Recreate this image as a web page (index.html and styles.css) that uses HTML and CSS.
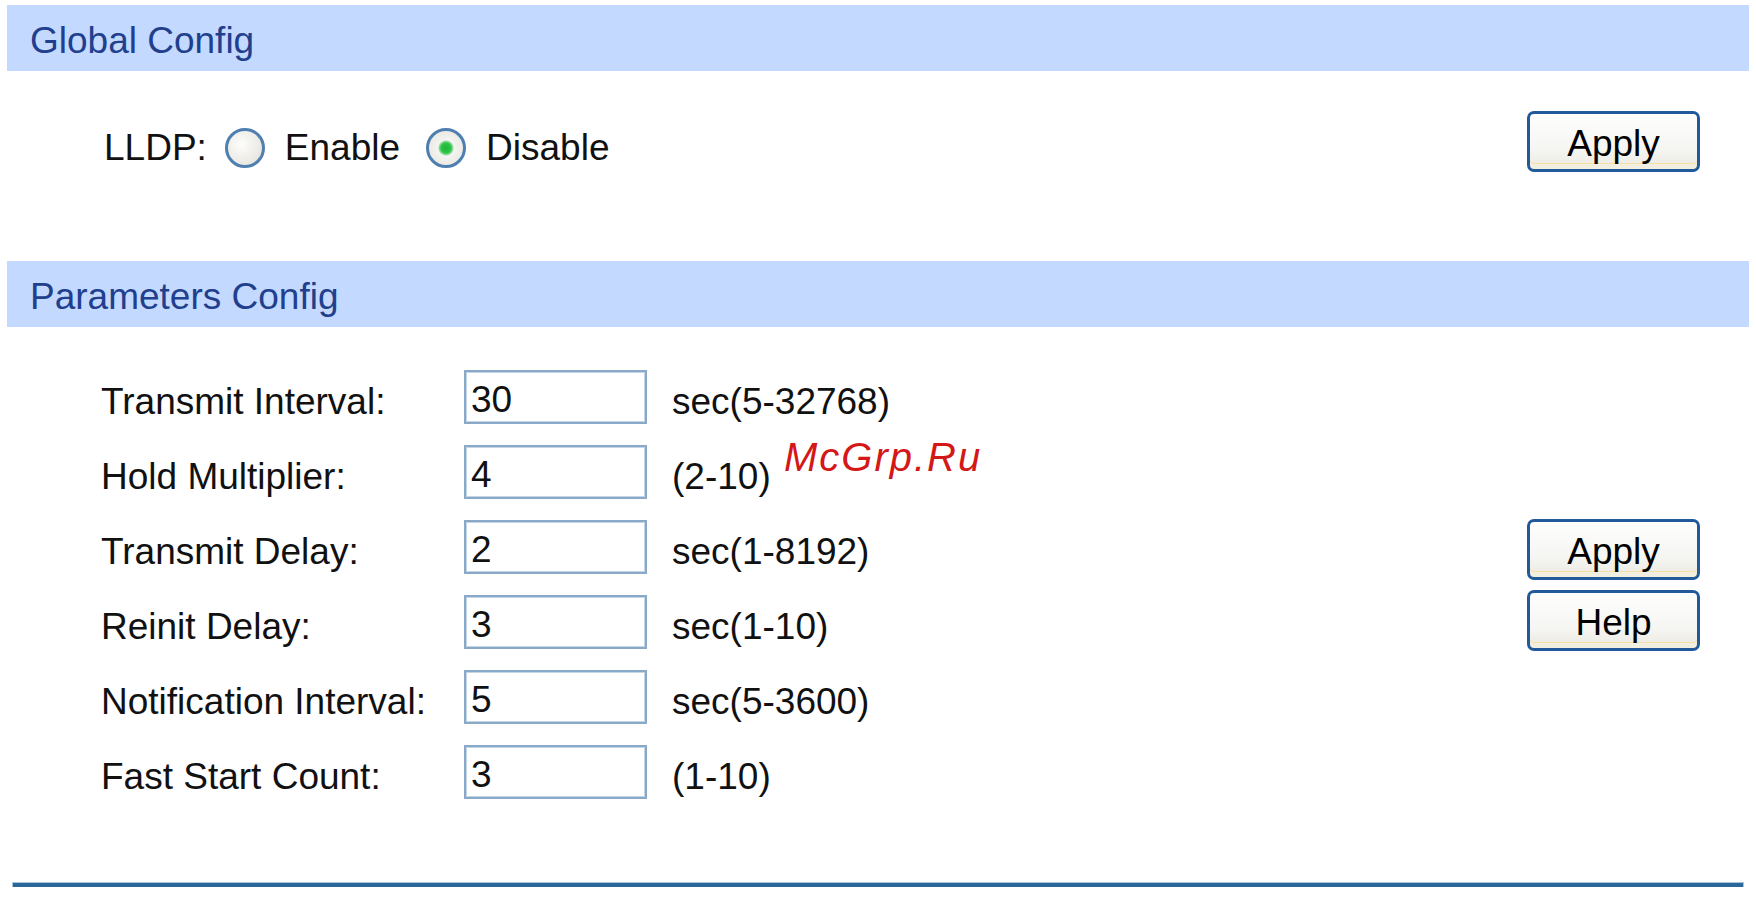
FILE: index.html
```html
<!DOCTYPE html>
<html lang="en">
<head>
    <meta charset="UTF-8">
    <meta name="viewport" content="width=device-width, initial-scale=1.0">
    <title>LLDP Config</title>
    <link rel="stylesheet" href="styles.css">
</head>
<body>

    <div class="panel-head">Global Config</div>
    <div class="global-row">
        <div class="lldp">
            <span class="lldp-label">LLDP:</span>
            <label class="radio-item"><input type="radio" name="lldp" value="enable"> Enable</label>
            <label class="radio-item"><input type="radio" name="lldp" value="disable" checked> Disable</label>
        </div>
        <button class="btn">Apply</button>
    </div>

    <div class="panel-head">Parameters Config</div>
    <div class="params">
        <div class="param-grid">
            <span class="param-label">Transmit Interval:</span>
            <input class="param-input" type="text" value="30">
            <span class="param-hint">sec(5-32768)</span>

            <span class="param-label">Hold Multiplier:</span>
            <input class="param-input" type="text" value="4">
            <span class="param-hint">(2-10)</span>

            <span class="param-label">Transmit Delay:</span>
            <input class="param-input" type="text" value="2">
            <span class="param-hint">sec(1-8192)</span>

            <span class="param-label">Reinit Delay:</span>
            <input class="param-input" type="text" value="3">
            <span class="param-hint">sec(1-10)</span>

            <span class="param-label">Notification Interval:</span>
            <input class="param-input" type="text" value="5">
            <span class="param-hint">sec(5-3600)</span>

            <span class="param-label">Fast Start Count:</span>
            <input class="param-input" type="text" value="3">
            <span class="param-hint">(1-10)</span>
        </div>
        <div class="btn-column">
            <button class="btn">Apply</button>
            <button class="btn">Help</button>
        </div>
    </div>

    <div class="footer-line"></div>

    <div class="watermark">McGrp.Ru</div>

</body>
</html>
```

FILE: styles.css
```css
body {
    margin: 0;
    font-family: "Liberation Sans", Arial, sans-serif;
    font-size: 37px;
    color: #111;
    background: #fff;
}
.panel-head {
    margin: 5px 7px 0;
    height: 66px;
    line-height: 66px;
    padding: 3px 0 0 23px;
    box-sizing: border-box;
    background: #c4d9ff;
    color: #213f8d;
}
.global-row {
    display: flex;
    justify-content: space-between;
    align-items: flex-start;
    height: 185px;
    box-sizing: border-box;
    padding: 40px 56px 0 104px;
}
.lldp {
    display: flex;
    align-items: center;
    margin-top: 16px;
    height: 42px;
}
.lldp-label {
    margin-right: 18px;
}
.radio-item {
    display: flex;
    align-items: center;
    margin-right: 26px;
}
.radio-item input {
    appearance: none;
    -webkit-appearance: none;
    width: 40px;
    height: 40px;
    margin: 0 20px 0 0;
    border-radius: 50%;
    border: 3px solid #4f7fb0;
    box-sizing: border-box;
    background: radial-gradient(circle at 40% 40%, #fdfdfb 0%, #ecebe5 60%, #d9d8d0 100%);
}
.radio-item input:checked {
    background: radial-gradient(circle, #1fb43a 0, #2cc544 5px, #9fdca9 7px, #f4f4f0 8px, #e4e3dc 100%);
}
.btn {
    width: 173px;
    height: 61px;
    padding: 5px 0 0;
    border: 3px solid #21599a;
    border-radius: 7px;
    background: linear-gradient(#fefefe, #f5f5f2 65%, #ebe9e0);
    box-shadow: inset 0 -5px 0 #f3efe0, inset 0 -6px 0 #f6dfa4;
    font-family: "Liberation Sans", Arial, sans-serif;
    font-size: 37px;
    color: #000;
}
.params {
    display: flex;
    justify-content: space-between;
    align-items: center;
    padding: 43px 56px 0 101px;
}
.param-grid {
    display: grid;
    grid-template-columns: 363px 183px auto;
    grid-auto-rows: 54px;
    row-gap: 21px;
    align-items: center;
}
.param-label,
.param-hint {
    padding-top: 9px;
}
.param-hint {
    margin-left: 25px;
}
.param-input {
    width: 183px;
    height: 54px;
    box-sizing: border-box;
    margin: 0;
    padding: 5px 5px 0;
    border: 2px solid #8aa9c9;
    box-shadow: inset 0 0 0 1px #c4d5e6;
    font-family: "Liberation Sans", Arial, sans-serif;
    font-size: 37px;
    color: #111;
}
.btn-column {
    display: flex;
    flex-direction: column;
    gap: 10px;
}
.footer-line {
    margin: 84px 13px 0;
    height: 4px;
    background: #2b6699;
    box-shadow: 0 0 0 1px #a8c3dc;
}
.watermark {
    position: absolute;
    left: 784px;
    top: 437px;
    line-height: 1;
    font-size: 40px;
    font-style: italic;
    letter-spacing: 2px;
    color: #d41717;
}
```
